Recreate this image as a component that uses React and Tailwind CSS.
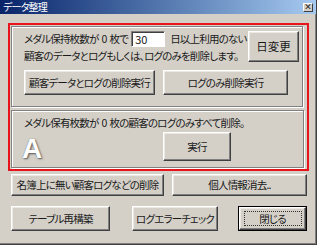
import React from "react";

const face =
  "shrink-0 whitespace-nowrap flex items-center justify-center bg-[#d4d0c8] border border-t-white border-l-white border-r-[#404040] border-b-[#404040] shadow-[inset_-1px_-1px_0_#808080,inset_1px_1px_0_#ece9e4] text-[#1a1a1a]";

const group =
  "border border-[#808080] shadow-[1px_1px_0_#ffffff,inset_1px_1px_0_#ffffff]";

function Button({ className = "", children }) {
  return <div className={`${face} ${className}`}>{children}</div>;
}

export default function App() {
  return (
    <div
      className="w-[317px] h-[245px] bg-[#d4d0c8] flex flex-col border-r border-b border-r-[#404040] border-b-[#404040] shadow-[inset_-1px_-1px_0_#808080] overflow-hidden text-[10.5px] tracking-[-0.8px] text-[#1a1a1a] [font-feature-settings:'palt'_1]"
      style={{ fontFamily: '"Noto Sans CJK JP", "Liberation Sans", sans-serif' }}
    >
      {/* title bar */}
      <div className="h-[14px] shrink-0 flex items-center justify-between bg-gradient-to-r from-[#0a246a] to-[#a6caf0] pl-[3px] pr-[3px]">
        <span className="text-white text-[10px] leading-none">データ整理</span>
        <div className="w-[10px] h-[9px] bg-[#d4d0c8] border border-t-white border-l-white border-r-[#404040] border-b-[#404040] flex items-center justify-center text-[8px] leading-none font-bold tracking-normal">
          ×
        </div>
      </div>

      <div className="pl-[8px] pt-[9px] flex flex-col">
        {/* red highlight */}
        <div className="w-[301px] border-2 border-[#e8141b] p-[1px] flex flex-col gap-[3px]">
          {/* group 1 */}
          <div className={`${group} h-[81px] mr-[3px] pl-[12px] pr-[3px] pt-[4px] flex flex-col`}>
            <div className="flex h-[31px]">
              <div className="flex flex-col">
                <div className="flex items-center h-[16px]">
                  <span className="whitespace-nowrap">
                    メダル保持枚数が<span className="mx-[3px]">0</span>枚で
                  </span>
                  <div className="ml-[3px] w-[34px] h-[16px] shrink-0 bg-white border border-t-[#808080] border-l-[#808080] border-r-white border-b-white shadow-[inset_1px_1px_0_#404040] flex items-center pl-[3px] text-[11px] tracking-normal leading-none">
                    30
                  </div>
                  <span className="ml-[5px] whitespace-nowrap">日以上利用のない</span>
                </div>
                <div className="mt-[1px] h-[16px] flex items-center whitespace-nowrap">
                  顧客のデータとログもしくは、ログのみを削除します。
                </div>
              </div>
              <Button className="ml-auto w-[51px] h-[31px] text-[11.5px] tracking-[0px]">日変更</Button>
            </div>
            <div className="flex gap-[8px] mt-[8px]">
              <Button className="w-[131px] h-[25px]">顧客データとログの削除実行</Button>
              <Button className="w-[125px] h-[25px]">ログのみ削除実行</Button>
            </div>
          </div>

          {/* group 2 */}
          <div className={`${group} h-[58px] mr-[2px] pt-[5px] flex flex-col`}>
            <div className="pl-[12px] h-[14px] flex items-center whitespace-nowrap">
              メダル保有枚数が<span className="mx-[3px]">0</span>枚の顧客のログのみすべて削除。
            </div>
            <div className="flex items-end mt-[2px] pl-[10px]">
              <span
                className="w-[141px] text-white font-bold text-[28px] leading-[24px] tracking-normal [text-shadow:1px_1px_2px_#555,0_0_1px_#777]"
                style={{ fontFamily: '"Liberation Sans", Arial, sans-serif' }}
              >
                A
              </span>
              <Button className="w-[68px] h-[29px]">実行</Button>
            </div>
          </div>
        </div>

        {/* bottom buttons */}
        <div className="flex gap-[8px] pl-[3px] mt-[3px]">
          <Button className="w-[153px] h-[22px]">名簿上に無い顧客ログなどの削除</Button>
          <Button className="w-[135px] h-[22px]">個人情報消去..</Button>
        </div>
        <div className="flex pl-[3px] mt-[10px]">
          <Button className="w-[99px] h-[25px]">テーブル再構築</Button>
          <Button className="ml-[22px] w-[86px] h-[25px]">ログエラーチェック</Button>
          <div className="ml-[20px] w-[69px] h-[25px] border border-black shrink-0">
            <div className={`${face} w-full h-full`}>
              <div className="border border-dotted border-[#333] w-[58px] h-[15px] flex items-center justify-center">
                閉じる
              </div>
            </div>
          </div>
        </div>
      </div>
    </div>
  );
}
